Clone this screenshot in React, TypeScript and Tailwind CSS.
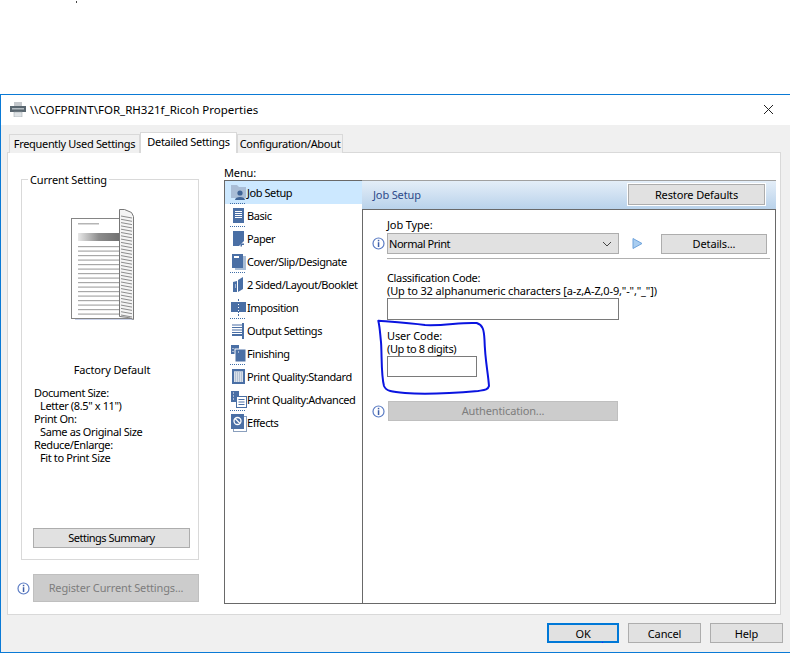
import React from "react";

const B = "#4a6fa5";

function Info() {
  return (
    <svg width="13" height="13" viewBox="0 0 13 13" className="shrink-0">
      <circle cx="6.5" cy="6.5" r="5.5" fill="#fff" stroke="#5b7cc4" strokeWidth="1.2" />
      <rect x="5.8" y="2.8" width="1.5" height="1.5" fill="#3f5fa8" />
      <rect x="5.8" y="5.2" width="1.5" height="4.8" fill="#3f5fa8" />
    </svg>
  );
}

function MenuIcon({ i }: { i: number }) {
  const common = { width: 16, height: 18, viewBox: "0 0 16 18", className: "shrink-0" };
  switch (i) {
    case 0:
      return (
        <svg {...common}>
          <path d="M0 1h6l2 2h7v11H0z" fill="#a9bdd6" />
          <circle cx="9" cy="9" r="2.6" fill="#3f6496" />
          <path d="M4 16c0-4 10-4 10 0z" fill="#3f6496" />
        </svg>
      );
    case 1:
      return (
        <svg {...common}>
          <rect x="2" y="1" width="11" height="15" fill={B} />
          <path d="M4 4.5h7M4 6.5h7M4 8.5h7M4 10.5h7" stroke="#fff" />
        </svg>
      );
    case 2:
      return (
        <svg {...common}>
          <path d="M2 1h11v10l-5 5H2z" fill={B} />
          <path d="M9.5 13.5h3.5v1.5h-2v1.500h-1.500z" fill={B} />
        </svg>
      );
    case 3:
      return (
        <svg {...common}>
          <path d="M12 3h3v14H4v-2h8z" fill="#a9bdd6" />
          <rect x="1" y="1" width="11" height="14" fill={B} />
          <rect x="3" y="3" width="5" height="2" fill="#fff" />
        </svg>
      );
    case 4:
      return (
        <svg {...common}>
          <path d="M2 6l4-1v11H2z" fill={B} />
          <path d="M7 4l5-3v12l-5 3z" fill={B} />
          <path d="M4 9h1M4 11h1" stroke="#fff" />
        </svg>
      );
    case 5:
      return (
        <svg {...common}>
          <rect x="0" y="3" width="7" height="10" fill={B} />
          <rect x="8" y="3" width="7" height="10" fill={B} />
          <path d="M7.5 0v17" stroke={B} strokeDasharray="2 1" />
        </svg>
      );
    case 6:
      return (
        <svg {...common}>
          <path d="M1 3h10M1 5.5h10M1 8h10M1 10.5h10" stroke={B} strokeWidth="1.2" />
          <path d="M1 12h10V1h2v16h-2v-3H1z" fill={B} />
        </svg>
      );
    case 7:
      return (
        <svg {...common}>
          <rect x="0" y="0" width="8" height="9" fill={B} />
          <rect x="4" y="4" width="11" height="13" fill={B} stroke="#fff" />
          <path d="M2 3v1M2 6v1M7 7h1" stroke="#fff" />
        </svg>
      );
    case 8:
      return (
        <svg {...common}>
          <rect x="1" y="1" width="13" height="15" fill={B} />
          <rect x="3" y="3" width="9" height="11" fill="#b4c2d4" />
          <path d="M3 5h9M3 7h9M3 9h9M3 11h9M3 13h9" stroke="#fff" strokeDasharray="1 1" />
        </svg>
      );
    case 9:
      return (
        <svg {...common}>
          <rect x="0" y="0" width="8" height="11" fill={B} />
          <path d="M2 2h1M2 5h1M2 8h1" stroke="#fff" />
          <rect x="5.5" y="5.5" width="10" height="11" fill="#fff" stroke={B} />
          <path d="M7.5 8.5h6M7.5 11h6M7.5 13.5h6" stroke={B} />
        </svg>
      );
    default:
      return (
        <svg {...common}>
          <rect x="2.5" y="2.5" width="13" height="15" fill="#fff" stroke="#8a9fbd" />
          <rect x="0" y="0" width="13" height="15" fill={B} />
          <circle cx="6.5" cy="7" r="3.5" fill="none" stroke="#fff" strokeWidth="1.3" />
          <path d="M4 4.5l5 5" stroke="#fff" strokeWidth="1.3" />
        </svg>
      );
  }
}

const items: [string, boolean][] = [
  ["Job Setup", true],
  ["Basic", true],
  ["Paper", false],
  ["Cover/Slip/Designate", true],
  ["2 Sided/Layout/Booklet", false],
  ["Imposition", true],
  ["Output Settings", false],
  ["Finishing", true],
  ["Print Quality:Standard", false],
  ["Print Quality:Advanced", true],
  ["Effects", false],
];

function PagePreview() {
  const lines: number[] = [];
  for (let y = 38; y < 108; y += 4.5) lines.push(y);
  const coils: number[] = [];
  for (let y = 8; y < 108; y += 3.3) coils.push(y);
  return (
    <svg width="68" height="114" viewBox="0 0 68 114">
      <defs>
        <linearGradient id="band" x1="0" x2="1" y1="0" y2="0">
          <stop offset="0" stopColor="#e8e8e8" />
          <stop offset="0.5" stopColor="#8c8c8c" />
          <stop offset="1" stopColor="#707070" />
        </linearGradient>
      </defs>
      <path d="M5 14h58v98H5z" fill="#c9d2ea" />
      <rect x="1.5" y="10.5" width="60" height="100" fill="#fff" stroke="#858585" />
      <rect x="8" y="15" width="21" height="1.5" fill="#b5b5b5" />
      <rect x="8" y="25" width="42" height="8" fill="url(#band)" />
      {lines.map((y) => (
        <rect key={y} x="8" y={y} width="42" height="1.2" fill="#a8a8a8" />
      ))}
      <path d="M49.5 1.5h5l7 3 2 4v103l-5-2-9-1z" fill="#f4f4f4" stroke="#777" />
      {coils.map((y) => (
        <path key={y} d={"M51 " + y + "l11 2"} stroke="#8d8d8d" strokeWidth="1" />
      ))}
    </svg>
  );
}

const btn = "flex items-center justify-center bg-[#e1e1e1] border border-[#adadad] text-black";

export default function App() {
  return (
    <div
      className="relative w-[790px] h-[653px] bg-white overflow-hidden flex flex-col text-[11px] tracking-[-0.14px] leading-[13px] text-black"
      style={{ fontFamily: '"Noto Sans", sans-serif' }}
    >
      <div className="h-[94px] shrink-0" />
      <div className="h-[559px] flex flex-col border-l border-t border-b border-[#0a7ad6] bg-[#f0f0f0]">
        <div className="h-[30px] shrink-0 bg-white flex items-center pl-[9px] pr-[10px] pb-[1px]">
          <svg width="16" height="15" viewBox="0 0 16 15" className="shrink-0 mr-[4px]">
            <rect x="4" y="0" width="8" height="4" fill="#c4c8cc" />
            <rect x="0" y="4" width="16" height="6" fill="#59666f" />
            <rect x="2" y="6" width="12" height="1.5" fill="#b4bcc2" />
            <rect x="4" y="10" width="8" height="5" fill="#dfe3e6" stroke="#9aa3a9" strokeWidth="0.5" />
          </svg>
          <span className="text-[11.5px] tracking-normal whitespace-nowrap">{"\\\\COFPRINT\\FOR_RH321f_Ricoh Properties"}</span>
          <svg width="11" height="11" viewBox="0 0 11 11" className="ml-auto mr-[6px]">
            <path d="M1 1l9 9M10 1l-9 9" stroke="#222" strokeWidth="1" />
          </svg>
        </div>

        <div className="pl-[6px] pt-[7px]">
          <div className="flex items-end h-[21px] pl-[2px] -mb-px relative z-10 tracking-[-0.32px]">
            <div className="w-[131px] h-[19px] pb-[2px] bg-[#f0f0f0] border border-[#d9d9d9] border-b-0 flex items-center justify-center whitespace-nowrap">
              Frequently Used Settings
            </div>
            <div className="w-[97px] h-[21px] bg-white border border-[#d9d9d9] border-b-0 flex items-start pt-[2px] justify-center whitespace-nowrap">
              Detailed Settings
            </div>
            <div className="w-[106px] h-[19px] pb-[2px] bg-[#f0f0f0] border border-[#d9d9d9] border-b-0 flex items-center justify-center whitespace-nowrap">
              Configuration/About
            </div>
          </div>

          <div className="w-[774px] h-[463px] bg-white border border-[#d9d9d9] flex pl-[9px]">
            <div className="w-[182px] shrink-0 pt-[26px] flex flex-col">
              <div className="relative ml-[4px] w-[178px] h-[381px] border border-[#d9d9d9] flex flex-col">
                <span className="absolute left-[6px] -top-[7px] bg-white px-[2px] whitespace-nowrap">Current Setting</span>
                <div className="mt-[28px] ml-[48px]">
                  <PagePreview />
                </div>
                <div className="mt-[41px] text-center pl-[4px]">Factory Default</div>
                <div className="mt-[10px] ml-[12px] flex flex-col tracking-[-0.38px]">
                  <span>Document Size:</span>
                  <span className="pl-[6px]">{'Letter (8.5" x 11")'}</span>
                  <span>Print On:</span>
                  <span className="pl-[6px]">Same as Original Size</span>
                  <span>Reduce/Enlarge:</span>
                  <span className="pl-[6px]">Fit to Print Size</span>
                </div>
                <div className={btn + " mt-auto mb-[11px] ml-[11px] w-[157px] h-[20px] pb-[1px] tracking-[-0.5px]"}>Settings Summary</div>
              </div>
              <div className="mt-[14px] flex items-center gap-[3px]">
                <Info />
                <div className="w-[166px] h-[28px] pb-[1px] bg-[#cccccc] border border-[#bfbfbf] text-[#7d7d7d] flex items-center justify-center whitespace-nowrap">
                  Register Current Settings...
                </div>
              </div>
            </div>

            <div className="ml-[25px] pt-[13px] flex flex-col">
              <div className="h-[14px]">Menu:</div>
              <div className="flex h-[424px]">
                <div className="w-[139px] shrink-0 border border-[#696969] flex flex-col tracking-[-0.44px]">
                  {items.map(([label, sep], i) => (
                    <div
                      key={label}
                      className={
                        "relative h-[23px] flex items-center pl-[6px] whitespace-nowrap " +
                        (i === 0 ? "bg-[#cce8ff]" : "")
                      }
                    >
                      <MenuIcon i={i} />
                      <span>{label}</span>
                      {sep && (
                        <span className="absolute left-[5px] bottom-0 w-[15px] border-b border-dotted border-[#3f6ea8]" />
                      )}
                    </div>
                  ))}
                </div>
                <div className="w-[414px] flex flex-col -ml-px">
                  <div className="h-[29px] shrink-0 pb-[2px] border-t border-[#a0a0a0] bg-gradient-to-b from-[#e4eef8] to-[#b9d2ea] flex items-center pl-[11px] pr-[11px] justify-between">
                    <span className="text-[#2d4a8a]">Job Setup</span>
                    <div className={btn + " w-[137px] h-[21px] outline outline-1 outline-white"}>Restore Defaults</div>
                  </div>
                  <div className="flex-1 bg-white border border-[#696969] flex flex-col pl-[9px]">
                    <div className="pl-[15px] mt-[8px] h-[14px]">Job Type:</div>
                    <div className="flex items-center mt-[1px]">
                      <Info />
                      <div className="ml-[2px] w-[232px] h-[21px] bg-[#e1e1e1] border border-[#adadad] flex items-center justify-between pl-[1px] pr-[6px]">
                        <span className="tracking-[-0.45px]">Normal Print</span>
                        <svg width="10" height="6" viewBox="0 0 10 6">
                          <path d="M1 1l4 4 4-4" fill="none" stroke="#444" strokeWidth="1" />
                        </svg>
                      </div>
                      <svg width="11" height="11" viewBox="0 0 11 11" className="ml-[13px]">
                        <path d="M1 .5l9 5-9 5z" fill="#a9cdf0" stroke="#6ea3dc" />
                      </svg>
                      <div className={btn + " ml-[18px] w-[106px] h-[20px]"}>Details...</div>
                    </div>
                    <div className="ml-[15px] mt-[4px] w-[383px] border-t border-[#b0b0b0]" />
                    <div className="ml-[15px] mt-[12px] flex flex-col">
                      <span className="tracking-[-0.35px]">Classification Code:</span>
                      <span className="whitespace-nowrap">{'(Up to 32 alphanumeric characters [a-z,A-Z,0-9,"-","_"])'}</span>
                      <div className="mt-[1px] w-[232px] h-[22px] bg-white border border-[#7a7a7a]" />
                      <span className="mt-[9px]">User Code:</span>
                      <span className="tracking-[-0.38px]">(Up to 8 digits)</span>
                      <div className="mt-[1px] w-[90px] h-[21px] bg-white border border-[#7a7a7a]" />
                    </div>
                    <div className="flex items-center mt-[24px]">
                      <Info />
                      <div className="ml-[3px] w-[230px] h-[20px] pb-[1px] bg-[#cccccc] border border-[#bfbfbf] text-[#7d7d7d] flex items-center justify-center">
                        Authentication...
                      </div>
                    </div>
                  </div>
                </div>
              </div>
            </div>
          </div>

          <div className="flex justify-end gap-[9px] w-[776px] mt-[8px]">
            <div className="w-[72px] h-[20px] bg-[#e1e1e1] border-2 border-[#0078d7] flex items-center justify-center">OK</div>
            <div className={btn + " w-[73px] h-[20px]"}>Cancel</div>
            <div className={btn + " w-[73px] h-[20px]"}>Help</div>
          </div>
        </div>
      </div>

      <div className="absolute left-[76px] top-[1px] w-[1px] h-[2px] bg-[#444]" />
      <div className="absolute left-[602px] top-[642px] w-[1px] h-[1px] bg-[#2020ff]" />
      <svg width="790" height="653" viewBox="0 0 790 653" className="absolute left-0 top-0 pointer-events-none">
        <path
          d="M378.3 320.7C395 322 410 323 425 325C445 326 460 322 476.7 323C483 325 484 330 484.5 340C485 360 488 372 489 386C488 390 484 390 478 391C455 393 430 395 405 393C392 392 386 391 384 386C381 375 382 355 381 342C380 333 380 328 378.3 320.7Z"
          fill="none"
          stroke="#0a14e0"
          strokeWidth="2"
          strokeLinejoin="round"
        />
      </svg>
    </div>
  );
}
